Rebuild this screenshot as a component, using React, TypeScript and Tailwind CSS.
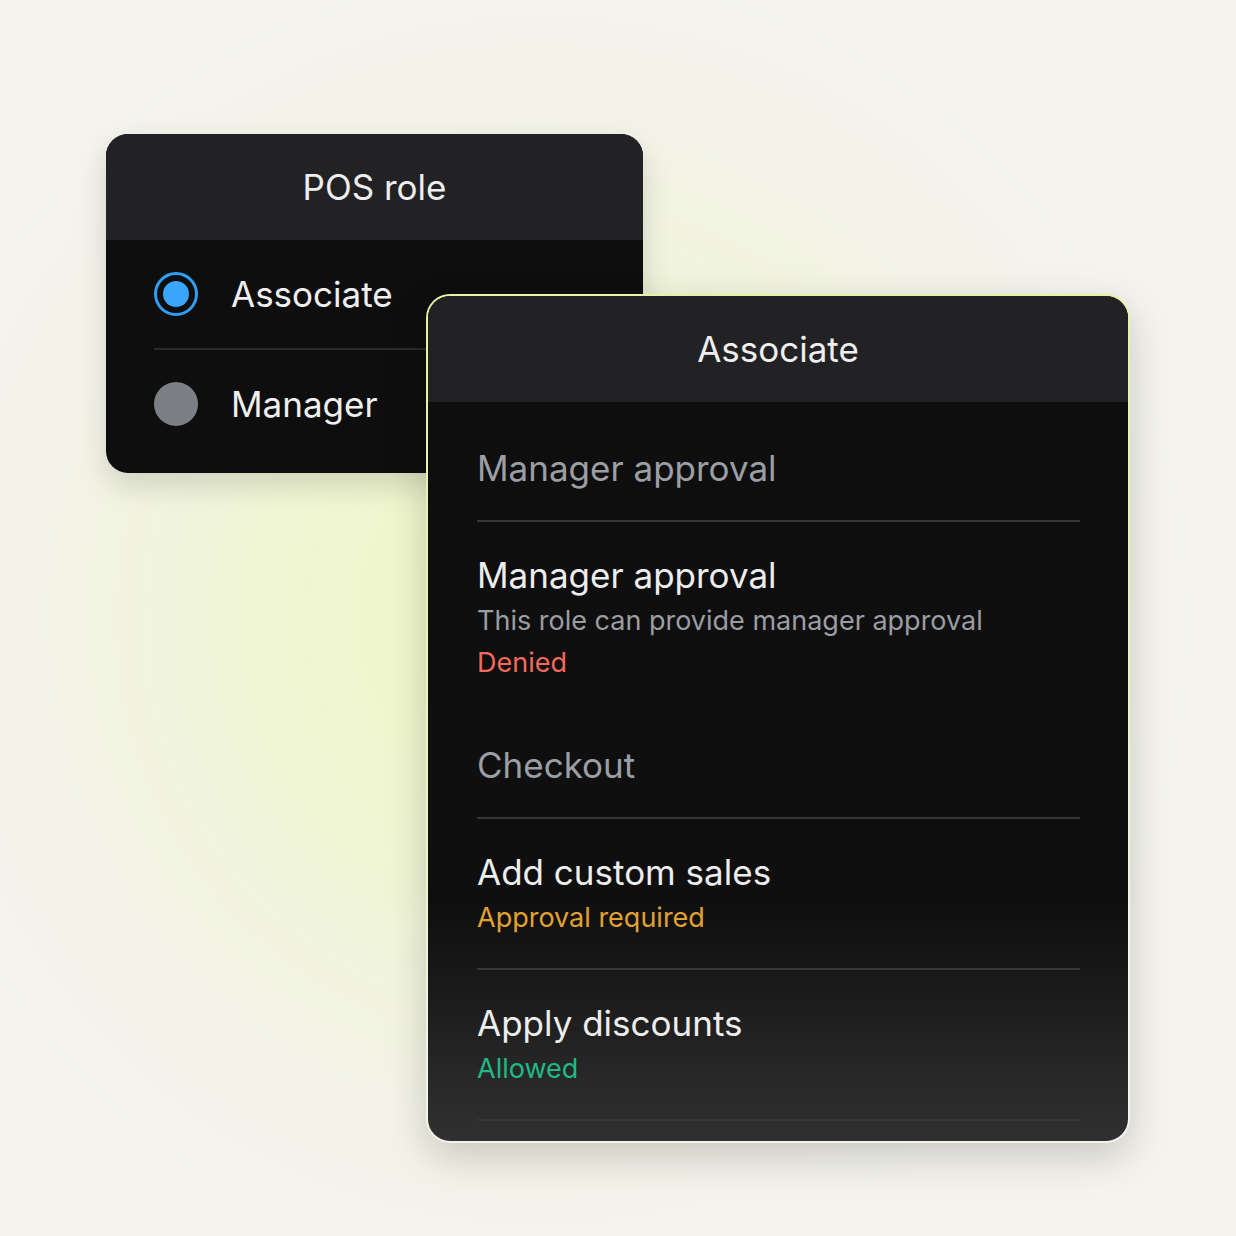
import React from 'react';

const font = { fontFamily: 'Inter, "Noto Sans", sans-serif' };

function RoleRow({ label, selected }: { label: string; selected?: boolean }) {
  return (
    <div className="flex h-[108px] items-center gap-[33px]">
      {selected ? (
        <div className="flex h-[44px] w-[44px] items-center justify-center rounded-full border-[3px] border-[#2f9ff5]">
          <div className="h-[26px] w-[26px] rounded-full bg-[#37a6fb]" />
        </div>
      ) : (
        <div className="h-[44px] w-[44px] rounded-full bg-[#7c7f84]" />
      )}
      <span className="text-[35px] leading-[40px] text-[#efefef]">{label}</span>
    </div>
  );
}

function SectionHeader({ title }: { title: string }) {
  return (
    <div className="pt-[46px] pb-[32px]">
      <div className="text-[35px] leading-[40px] text-[#9b9fa4]">{title}</div>
    </div>
  );
}

function Divider() {
  return <div className="h-[2px] bg-[#35363a]" />;
}

interface Item {
  title: string;
  desc?: string;
  status: string;
  tone: 'denied' | 'required' | 'allowed';
}

const toneClass = {
  denied: 'text-[#f36a5d]',
  required: 'text-[#e1a233]',
  allowed: 'text-[#20b985]',
};

function PermissionItem({ item, last }: { item: Item; last?: boolean }) {
  return (
    <div className={last ? 'pt-[31px] pb-[15px]' : 'pt-[31px] pb-[29px]'}>
      <div className="text-[35px] leading-[44px] text-[#ededed]">{item.title}</div>
      <div className="pt-[3px]">
        {item.desc && <div className="text-[27px] leading-[42px] text-[#9a9ea3]">{item.desc}</div>}
        <div className={`text-[27px] leading-[42px] ${toneClass[item.tone]}`}>{item.status}</div>
      </div>
    </div>
  );
}

export default function App() {
  return (
    <div
      className="relative h-[1236px] w-[1236px] overflow-hidden bg-[#f4f3ee] bg-[radial-gradient(circle_at_540px_620px,#eef7c2_0%,#f0f5d4_30%,#f3f3e8_54%,#f4f3ee_72%)] pl-[106px] pt-[134px]"
      style={font}
    >
      {/* POS role card */}
      <div className="w-[537px] overflow-hidden rounded-[22px] bg-[#0e0e0f] shadow-[0_12px_30px_rgba(0,0,0,0.14)]">
        <div className="flex h-[106px] items-center justify-center bg-[#222225]">
          <span className="text-[35px] text-[#eeeeee]">POS role</span>
        </div>
        <div className="px-[48px] pb-[15px]">
          <RoleRow label="Associate" selected />
          <div className="h-[2px] bg-[#2b2b2e]" />
          <RoleRow label="Manager" />
        </div>
      </div>

      {/* Associate permissions card */}
      <div className="absolute left-[426px] top-[294px] rounded-[24px] bg-[linear-gradient(to_bottom,#e6f3a4_0%,#e9f3b8_35%,rgba(240,243,220,0)_75%)] p-[2px] shadow-[0_14px_40px_rgba(0,0,0,0.18)]">
        <div className="w-[700px] overflow-hidden rounded-[22px] bg-[linear-gradient(to_bottom,#0e0e0f_0%,#0f0f10_72%,#1a1a1b_82%,#262627_91%,#303031_100%)]">
          <div className="flex h-[106px] items-center justify-center bg-[#222225]">
            <span className="text-[35px] text-[#eeeeee]">Associate</span>
          </div>
          <div className="pl-[49px] pr-[48px] pb-[20px]">
            <SectionHeader title="Manager approval" />
            <Divider />
            <PermissionItem
              last
              item={{
                title: 'Manager approval',
                desc: 'This role can provide manager approval',
                status: 'Denied',
                tone: 'denied',
              }}
            />
            <SectionHeader title="Checkout" />
            <Divider />
            <PermissionItem item={{ title: 'Add custom sales', status: 'Approval required', tone: 'required' }} />
            <Divider />
            <PermissionItem item={{ title: 'Apply discounts', status: 'Allowed', tone: 'allowed' }} />
            <Divider />
          </div>
        </div>
      </div>
    </div>
  );
}
